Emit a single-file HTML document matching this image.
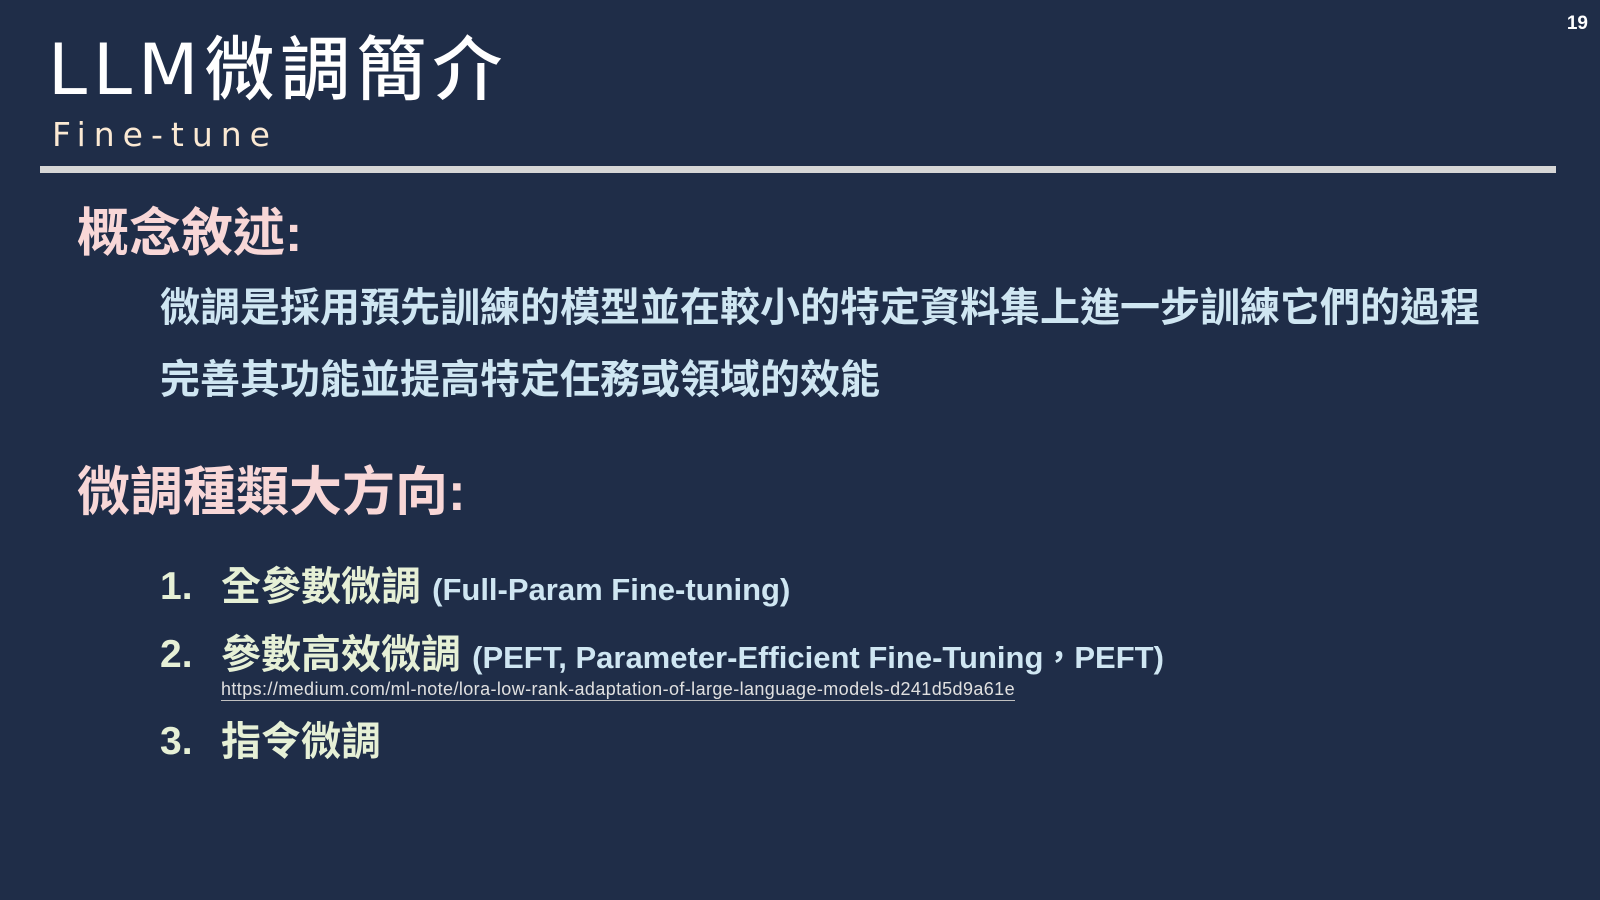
<!DOCTYPE html>
<html><head><meta charset="utf-8"><style>
body{margin:0;width:1600px;height:900px;background:#1f2d48;position:relative;overflow:hidden;font-family:"Liberation Sans","Noto Sans CJK TC",sans-serif;}
.a{position:absolute;white-space:nowrap;line-height:1;}
</style></head><body>
<div class="a" style="right:12px;top:14px;color:#fff;font-weight:bold;font-size:19px;">19</div>
<div class="a" style="left:48px;top:35px;color:#fff;font-size:70px;font-weight:500;letter-spacing:6px;font-family:'DejaVu Sans','Noto Sans CJK TC',sans-serif;">LLM微調簡介</div>
<div class="a" style="left:52px;top:118px;color:#fbe9d3;font-size:33px;letter-spacing:8px;font-family:'DejaVu Sans',sans-serif;">Fine-tune</div>
<div class="a" style="left:40px;top:166px;width:1516px;height:7px;background:#d6d6d6;"></div>
<div class="a" style="left:77px;top:208px;color:#f8d7d7;font-size:52px;font-weight:bold;">概念敘述:</div>
<div class="a" style="left:160px;top:288px;color:#cfe6f2;font-size:40px;font-weight:bold;">微調是採用預先訓練的模型並在較小的特定資料集上進一步訓練它們的過程</div>
<div class="a" style="left:160px;top:360px;color:#cfe6f2;font-size:40px;font-weight:bold;">完善其功能並提高特定任務或領域的效能</div>
<div class="a" style="left:77px;top:466px;color:#f8d7d7;font-size:53px;font-weight:bold;">微調種類大方向:</div>
<div class="a" style="left:160px;top:567px;color:#e6f0d6;font-size:39px;font-weight:bold;">1.</div>
<div class="a" style="left:221px;top:567px;color:#e6f0d6;font-size:40px;font-weight:bold;">全參數微調 <span style="color:#cfe6f2;font-size:31px;">(Full-Param Fine-tuning)</span></div>
<div class="a" style="left:160px;top:635px;color:#e6f0d6;font-size:39px;font-weight:bold;">2.</div>
<div class="a" style="left:221px;top:635px;color:#e6f0d6;font-size:40px;font-weight:bold;">參數高效微調 <span style="color:#cfe6f2;font-size:31px;">(PEFT, Parameter-Efficient Fine-Tuning，PEFT)</span></div>
<div class="a" style="left:221px;top:680px;color:#e0e0e0;font-size:18px;letter-spacing:0.4px;border-bottom:1px solid #c0c0c0;padding-bottom:2px;">https://medium.com/ml-note/lora-low-rank-adaptation-of-large-language-models-d241d5d9a61e</div>
<div class="a" style="left:160px;top:722px;color:#e6f0d6;font-size:39px;font-weight:bold;">3.</div>
<div class="a" style="left:221px;top:722px;color:#e6f0d6;font-size:40px;font-weight:bold;">指令微調</div>
</body></html>
